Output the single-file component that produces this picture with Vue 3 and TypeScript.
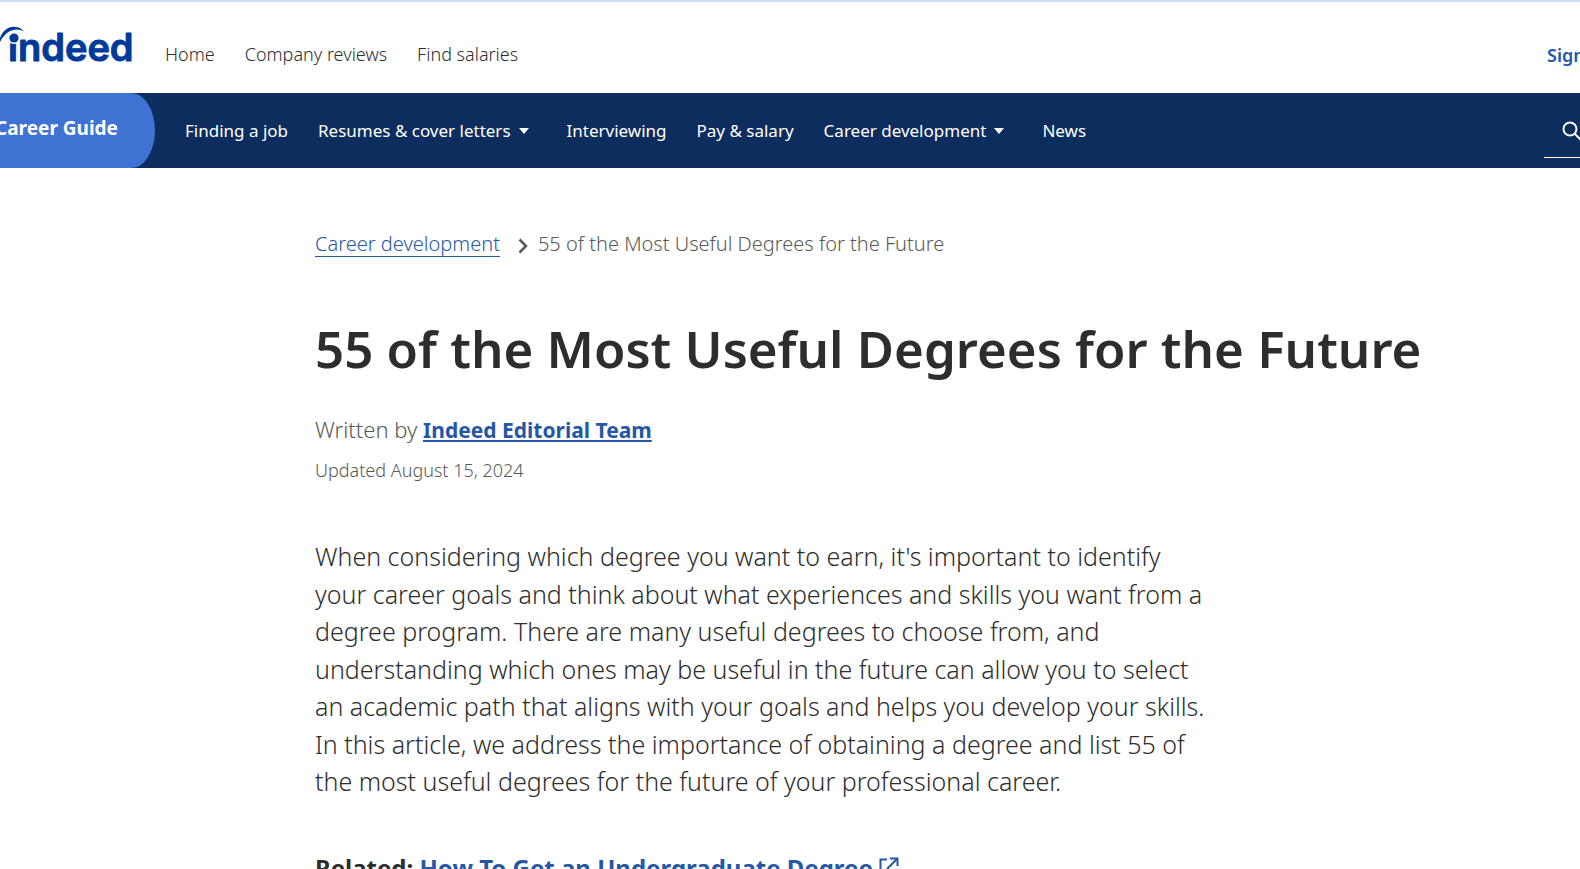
<script setup lang="ts">
interface NavItem {
  label: string
  menu?: boolean
}

const siteLinks: string[] = ['Home', 'Company reviews', 'Find salaries']

const guideLinks: NavItem[] = [
  { label: 'Finding a job' },
  { label: 'Resumes & cover letters', menu: true },
  { label: 'Interviewing' },
  { label: 'Pay & salary' },
  { label: 'Career development', menu: true },
  { label: 'News' },
]

const title = '55 of the Most Useful Degrees for the Future'
</script>

<template>
  <div class="page">
    <header class="site-header">
      <a class="logo" href="#" aria-label="indeed home">
        <svg width="140" height="46" viewBox="0 0 140 46" aria-hidden="true">
          <text class="wordmark" x="8" y="39">indeed</text>
          <circle class="dot-gap" cx="14" cy="15" r="7" />
          <circle cx="14" cy="16" r="4.6" />
          <path d="M0 16C3 8 9 4 15 5C19 5 22 7 24 9.5C17 5.500 7 7 0 20Z" />
        </svg>
      </a>
      <nav class="site-nav" aria-label="Site">
        <a v-for="link in siteLinks" :key="link" href="#">{{ link }}</a>
      </nav>
      <a class="sign-in" href="#">Sign in</a>
    </header>

    <div class="guide-bar">
      <a class="guide-home" href="#">Career Guide</a>
      <nav class="guide-nav" aria-label="Career guide">
        <template v-for="item in guideLinks" :key="item.label">
          <button v-if="item.menu" type="button" class="guide-item has-menu">
            {{ item.label }}
            <svg width="10" height="6" viewBox="0 0 10 6" aria-hidden="true"><path d="M0 0H10L5 6Z" /></svg>
          </button>
          <a v-else class="guide-item" href="#">{{ item.label }}</a>
        </template>
      </nav>
      <button type="button" class="search" aria-label="Search">
        <svg width="22" height="22" viewBox="0 0 22 22" aria-hidden="true">
          <circle cx="8" cy="8" r="6.5" />
          <path d="M12.7 12.7L20 20" />
        </svg>
      </button>
    </div>

    <main class="article">
      <nav class="crumbs" aria-label="Breadcrumb">
        <a href="#">Career development</a>
        <svg width="10" height="16" viewBox="0 0 10 16" aria-hidden="true"><path d="M1.5 1.5L8 8L1.5 14.5" /></svg>
        <span>{{ title }}</span>
      </nav>
      <h1>{{ title }}</h1>
      <p class="byline">Written by <a href="#">Indeed Editorial Team</a></p>
      <p class="updated">Updated August 15, 2024</p>
      <p class="intro">
        When considering which degree you want to earn, it's important to identify
        your career goals and think about what experiences and skills you want from a
        degree program. There are many useful degrees to choose from, and
        understanding which ones may be useful in the future can allow you to select
        an academic path that aligns with your goals and helps you develop your skills.
        In this article, we address the importance of obtaining a degree and list 55 of
        the most useful degrees for the future of your professional career.
      </p>
      <p class="related">
        Related: <a href="#">How To Get an Undergraduate Degree
          <svg width="20" height="20" viewBox="0 0 20 20" aria-hidden="true">
            <path d="M8 2.500H1.500V18.500H17.500V12M11 1.500H18.500V9M18 2L8 12" />
          </svg></a>
      </p>
    </main>
  </div>
</template>

<style>
body {
  background: #fff;
  overflow: hidden;
}
</style>

<style scoped>
.page {
  height: 100vh;
  overflow: hidden;
  box-sizing: border-box;
  border-top: 2px solid #ccd9f8;
  font-family: "Noto Sans", "Open Sans", sans-serif;
  color: #2d2d2d;
}
a {
  text-decoration: none;
  color: inherit;
}
button {
  font: inherit;
  color: inherit;
  background: none;
  border: 0;
  padding: 0;
}
.site-header {
  display: flex;
  height: 91px;
  overflow: hidden;
}
.logo {
  width: 165px;
  flex: none;
  padding-top: 20px;
}
.logo svg {
  display: block;
  fill: #003a9b;
}
.wordmark {
  font-family: Inter, "Liberation Sans", sans-serif;
  font-weight: 600;
  font-size: 38px;
  stroke: #003a9b;
  stroke-width: 1px;
  stroke-linejoin: round;
}
.dot-gap {
  fill: #fff;
}
.site-nav {
  display: flex;
  gap: 30px;
  padding-top: 39px;
  font-size: 18px;
  line-height: 26px;
  font-weight: 300;
}
.sign-in {
  margin: 39px -26px 0 auto;
  font-size: 18px;
  line-height: 28px;
  font-weight: 600;
  color: #2557a7;
  white-space: nowrap;
}
.guide-bar {
  display: flex;
  height: 75px;
  overflow: hidden;
  background: #0d2d5e;
  color: #fff;
  font-size: 17px;
}
.guide-home {
  flex: none;
  box-sizing: border-box;
  width: 163px;
  margin-left: -8px;
  padding: 20px 0 0 3px;
  line-height: 30px;
  font-size: 19px;
  font-weight: 700;
  background: #3f73d3;
  border-radius: 0 24px 24px 0 / 0 38px 38px 0;
}
.guide-nav {
  display: flex;
  gap: 30px;
  padding: 24px 0 0 30px;
  line-height: 28px;
}
.guide-item {
  display: flex;
  align-items: center;
  height: 28px;
  white-space: nowrap;
}
.has-menu {
  gap: 8px;
  padding-right: 8px;
}
.has-menu svg {
  fill: #fff;
}
.search {
  display: flex;
  box-sizing: border-box;
  width: 240px;
  height: 65px;
  margin: 0 -204px 0 auto;
  padding: 28px 0 0 18px;
  border-bottom: 1px solid #fff;
}
.search svg {
  fill: none;
  stroke: #fff;
  stroke-width: 2;
}
.article {
  margin-left: 315px;
}
.crumbs {
  display: flex;
  align-items: flex-end;
  padding-top: 63px;
  font-size: 20px;
  line-height: 26px;
  font-weight: 300;
  color: #595959;
}
.crumbs a {
  line-height: 24px;
  color: #2557a7;
  border-bottom: 1px solid #2557a7;
}
.crumbs svg {
  margin: 0 10px 3px 18px;
  fill: none;
  stroke: #595959;
  stroke-width: 2.5;
}
h1 {
  margin: 53px 0 0;
  font-size: 51px;
  line-height: 76px;
  font-weight: 600;
  white-space: nowrap;
}
p {
  margin: 0;
}
.byline {
  padding-top: 26px;
  font-size: 22px;
  line-height: 34px;
  font-weight: 300;
  color: #595959;
}
.byline a {
  font-size: 21px;
  font-weight: 700;
  color: #2557a7;
  text-decoration: underline;
}
.updated {
  padding-top: 10px;
  font-size: 18px;
  line-height: 26px;
  font-weight: 300;
  color: #595959;
}
.intro {
  max-width: 896px;
  padding-top: 55px;
  font-size: 25px;
  line-height: 1.5;
  font-weight: 300;
}
.related {
  padding-top: 48px;
  font-size: 24px;
  line-height: 38px;
  font-weight: 700;
}
.related a {
  color: #2557a7;
}
.related svg {
  fill: none;
  stroke: #2557a7;
  stroke-width: 2;
}
</style>
